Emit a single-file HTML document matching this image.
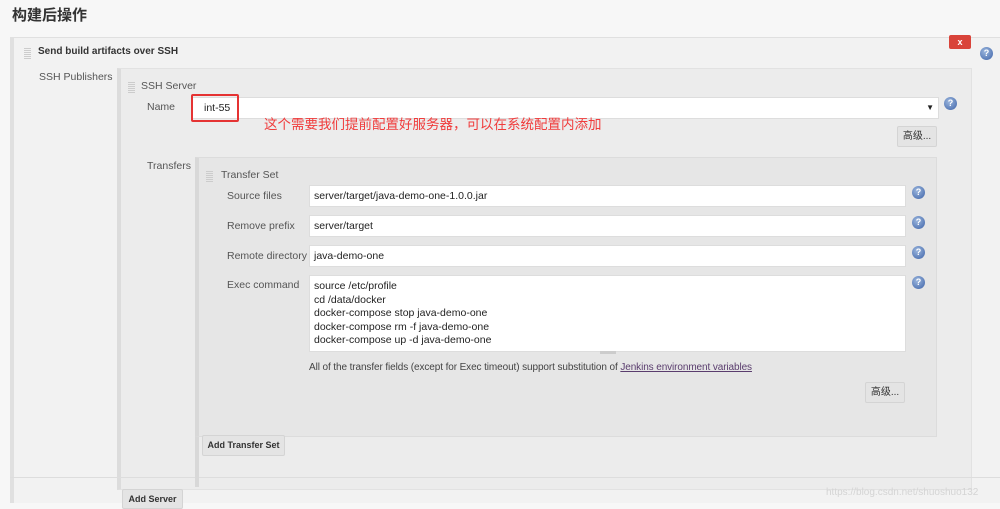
<!DOCTYPE html><html><head><meta charset="utf-8"><style>
*{margin:0;padding:0;box-sizing:border-box}
body{width:1000px;height:503px;overflow:hidden;background:#f7f7f7;font-family:"Liberation Sans","Noto Sans CJK SC",sans-serif;font-size:11px;color:#333;position:relative}
.a{position:absolute}
.in{position:absolute;background:#fff;border:1px solid #ddd;padding:0 4px;line-height:20px;color:#222;font-size:10.5px}
.btn{position:absolute;background:#e4e4e4;border:1px solid #d4d4d4;border-radius:2px;font-size:10px;text-align:center;color:#333}
.h{position:absolute;width:13px;height:13px;border-radius:50%;background:radial-gradient(circle at 40% 35%,#9bb6dd,#3e63a8);color:#fff;font-size:9px;font-weight:bold;text-align:center;line-height:13px}
.g{position:absolute;width:7px;height:12px;background:repeating-linear-gradient(0deg,#ccc 0 1px,transparent 1px 2px)}
.l{position:absolute;color:#555;font-size:10.5px}
</style></head><body>
<div class="a" style="left:12px;top:4px;font-size:15px;font-weight:bold;color:#333">构建后操作</div>
<div class="a" style="left:10px;top:37px;width:990px;height:466px;background:#f2f2f2;border-top:1px solid #e0e0e0;border-left:4px solid #e0e0e0"></div>
<div class="g" style="left:24px;top:47px"></div>
<div class="a" style="left:38px;top:46px;font-weight:bold;font-size:10px;color:#333">Send build artifacts over SSH</div>
<div class="a" style="left:949px;top:35px;width:22px;height:14px;background:#d9443a;border-radius:2px;color:#fff;font-size:9px;text-align:center;line-height:14px;font-weight:bold">x</div>
<div class="h" style="left:980px;top:47px">?</div>
<div class="l" style="left:39px;top:71px">SSH Publishers</div>
<div class="a" style="left:117px;top:68px;width:855px;height:422px;background:#ececec;border:1px solid #e2e2e2;border-left:4px solid #dcdcdc"></div>
<div class="a" style="left:10px;top:477px;width:990px;height:1px;background:#ddd"></div>
<div class="g" style="left:128px;top:81px"></div>
<div class="a" style="left:141px;top:80px;color:#555;font-size:10.5px">SSH Server</div>
<div class="l" style="left:147px;top:101px">Name</div>
<div class="in" style="left:192px;top:97px;width:747px;height:22px;padding-left:11px">int-55<span style="position:absolute;right:4px;top:0;font-size:8px">▼</span></div>
<div class="a" style="left:191px;top:94px;width:48px;height:28px;border:2px solid #e53333;border-radius:2px"></div>
<div class="a" style="left:264px;top:113px;color:#f03c3c;font-size:13.5px">这个需要我们提前配置好服务器，可以在系统配置内添加</div>
<div class="h" style="left:944px;top:97px">?</div>
<div class="btn" style="left:897px;top:126px;width:40px;height:21px;line-height:19px">高级...</div>
<div class="l" style="left:147px;top:160px">Transfers</div>
<div class="a" style="left:195px;top:157px;width:742px;height:280px;background:#e6e6e6;border:1px solid #dcdcdc;border-left:4px solid #d8d8d8"></div>
<div class="a" style="left:195px;top:437px;width:4px;height:50px;background:#d8d8d8"></div>
<div class="g" style="left:206px;top:170px"></div>
<div class="a" style="left:221px;top:169px;color:#555;font-size:10.5px">Transfer Set</div>
<div class="l" style="left:227px;top:190px">Source files</div>
<div class="in" style="left:309px;top:185px;width:597px;height:22px">server/target/java-demo-one-1.0.0.jar</div>
<div class="h" style="left:912px;top:186px">?</div>
<div class="l" style="left:227px;top:220px">Remove prefix</div>
<div class="in" style="left:309px;top:215px;width:597px;height:22px">server/target</div>
<div class="h" style="left:912px;top:216px">?</div>
<div class="l" style="left:227px;top:250px">Remote directory</div>
<div class="in" style="left:309px;top:245px;width:597px;height:22px">java-demo-one</div>
<div class="h" style="left:912px;top:246px">?</div>
<div class="l" style="left:227px;top:279px">Exec command</div>
<div class="in" style="left:309px;top:275px;width:597px;height:77px;line-height:13.5px;padding-top:4px">source /etc/profile<br>cd /data/docker<br>docker-compose stop java-demo-one<br>docker-compose rm -f java-demo-one<br>docker-compose up -d java-demo-one</div>
<div class="a" style="left:600px;top:351px;width:16px;height:3px;background:#ccc"></div>
<div class="h" style="left:912px;top:276px">?</div>
<div class="a" style="left:309px;top:362px;color:#444;font-size:10px;letter-spacing:-0.1px">All of the transfer fields (except for Exec timeout) support substitution of <span style="color:#5a3d6e;text-decoration:underline">Jenkins environment variables</span></div>
<div class="btn" style="left:865px;top:382px;width:40px;height:21px;line-height:19px">高级...</div>
<div class="btn" style="left:202px;top:435px;width:83px;height:21px;line-height:19px;font-weight:bold;font-size:9px">Add Transfer Set</div>
<div class="btn" style="left:122px;top:489px;width:61px;height:20px;line-height:19px;font-weight:bold;font-size:9px">Add Server</div>
<div class="a" style="left:826px;top:487px;color:#d4d4d4;font-size:10px">https://blog.csdn.net/shuoshuo132</div>
</body></html>
